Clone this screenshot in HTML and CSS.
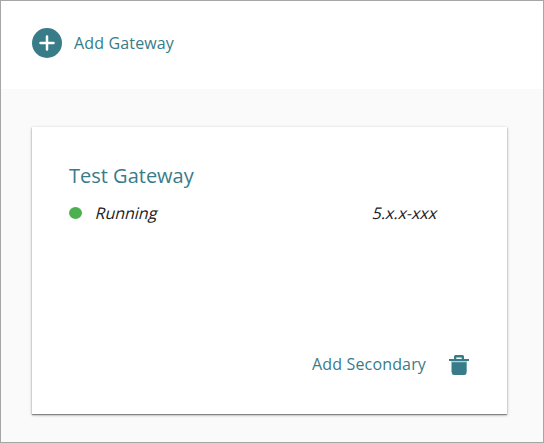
FILE: index.html
```html
<!DOCTYPE html>
<html lang="en">
<head>
<meta charset="utf-8">
<title>Gateways</title>
<link rel="stylesheet" href="styles.css">
</head>
<body>
<main class="page">
  <header class="toolbar">
    <svg class="add-icon" viewBox="0 0 30 30" aria-hidden="true"><circle cx="15" cy="15" r="15"/><path d="M15 8.500v13M8.500 15h13"/></svg>
    <span class="add-label">Add Gateway</span>
  </header>
  <section class="card">
    <h2 class="title">Test Gateway</h2>
    <div class="status">
      <span class="dot"></span>
      <span class="state">Running</span>
      <span class="version">5.x.x-xxx</span>
    </div>
    <footer class="actions">
      <span class="secondary">Add Secondary</span>
      <svg class="trash" viewBox="0 0 20 20" aria-hidden="true"><path class="rim" d="M2 6h16v11H2z"/><path d="M0 4h5V1.500Q5 0 6.500 0h7Q15 0 15 1.500V4h5v2H0zM7.300 2.500V4h5.400V2.500zM2.800 7.200h14.700V17.500q0 2.500-2.500 2.500H5.300q-2.500 0-2.500-2.500z"/></svg>
    </footer>
  </section>
</main>
</body>
</html>
```
FILE: styles.css
```css
* { box-sizing: border-box; }
body { margin: 0; font-family: "Open Sans", sans-serif; font-size: 16px; line-height: 22px; color: #212121; }
.page { height: 443px; border: 1px solid #a6a6a6; background: #fafafa; overflow: hidden; }
.toolbar { height: 88px; padding: 0 31px 4px; background: #fff; display: flex; align-items: center; gap: 12px; color: #377c88; }
.add-label { letter-spacing: .15px; }
.add-icon { width: 30px; height: 30px; fill: #377c88; }
.add-icon path { stroke: #fff; stroke-width: 2.5; stroke-linecap: round; }
.card { width: 475px; height: 287px; margin: 38px 0 0 31px; padding: 35px 38px 37px 37px; background: #fff; display: flex; flex-direction: column; box-shadow: 0 1px 3px rgba(0,0,0,.3), 0 1px 1px rgba(0,0,0,.35); }
.title { margin: 0; font-size: 20px; line-height: 28px; font-weight: 400; color: #377c88; }
.status { display: flex; align-items: center; margin-top: 12px; }
.dot { width: 13px; height: 12px; border-radius: 50%; background: #4caf50; margin-right: 14px; }
.state, .version { transform: skewX(-14deg); }
.version { margin-left: auto; margin-right: 31px; }
.actions { margin-top: auto; display: flex; justify-content: flex-end; align-items: center; gap: 23px; color: #377c88; }
.secondary { letter-spacing: .15px; padding-bottom: 2px; }
.trash { width: 20px; height: 20px; fill: #377c88; fill-rule: evenodd; }
.rim { fill: #b5d0d4; }
```
